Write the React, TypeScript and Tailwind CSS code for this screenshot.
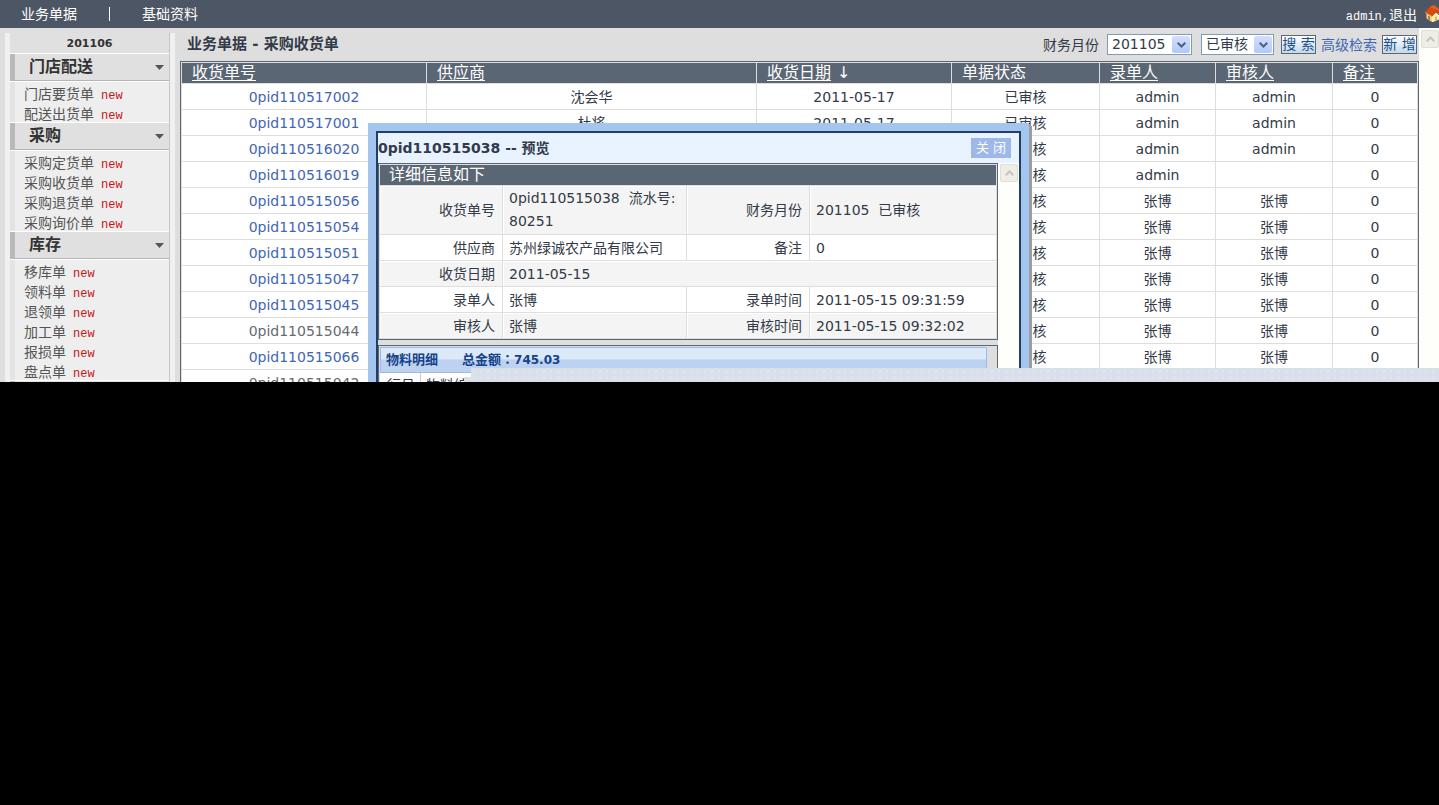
import React from "react";

type Receipt = {
  id: string;
  supplier?: string;
  date?: string;
  author: string;
  auditor: string;
  visited?: boolean;
};

const receipts: Receipt[] = [
  { id: "0pid110517002", supplier: "沈会华", date: "2011-05-17", author: "admin", auditor: "admin" },
  { id: "0pid110517001", supplier: "杜将", date: "2011-05-17", author: "admin", auditor: "admin" },
  { id: "0pid110516020", author: "admin", auditor: "admin" },
  { id: "0pid110516019", author: "admin", auditor: "" },
  { id: "0pid110515056", author: "张博", auditor: "张博" },
  { id: "0pid110515054", author: "张博", auditor: "张博" },
  { id: "0pid110515051", author: "张博", auditor: "张博" },
  { id: "0pid110515047", author: "张博", auditor: "张博" },
  { id: "0pid110515045", author: "张博", auditor: "张博" },
  { id: "0pid110515044", author: "张博", auditor: "张博", visited: true },
  { id: "0pid110515066", author: "张博", auditor: "张博" },
  { id: "0pid110515042", author: "张博", auditor: "张博", visited: true },
];

const menu = [
  { title: "门店配送", items: ["门店要货单", "配送出货单"] },
  { title: "采购", items: ["采购定货单", "采购收货单", "采购退货单", "采购询价单"] },
  { title: "库存", items: ["移库单", "领料单", "退领单", "加工单", "报损单", "盘点单"] },
  { title: "", items: [] },
];

const columns = [
  { label: "收货单号", width: "w-[245px]", sortable: true },
  { label: "供应商", width: "", sortable: true },
  { label: "收货日期", width: "w-[195px]", sortable: true, sorted: true },
  { label: "单据状态", width: "w-[148px]", sortable: false },
  { label: "录单人", width: "w-[116px]", sortable: true },
  { label: "审核人", width: "w-[117px]", sortable: true },
  { label: "备注", width: "w-[85px]", sortable: true },
];

function HouseIcon() {
  return (
    <svg width="14" height="18" viewBox="0 0 14 18" className="shrink-0" aria-hidden="true">
      <path d="M1.5 8 L7 11 V17 L1.5 13.5 Z" fill="#f5d58c" />
      <path d="M7 11 L11 7.5 L14 10 V14.5 L8 17 L7 17 Z" fill="#fdf0b4" />
      <path d="M3 10.5 L5 11.7 V15.2 L3 14 Z" fill="#b5762e" />
      <path d="M10 12 L12 11.2 V15.2 L10 16 Z" fill="#e0b050" />
      <path d="M0 7.5 L4.5 2 L9 0 L14 4 V9 L11.5 6.5 L7 11.5 Z" fill="#d9480f" />
      <path d="M4.5 2 L9 0 L14 4 V5.5 L9.5 4 Z" fill="#e5601a" />
      <path d="M0 7.5 L7 11.5" stroke="#f29a4a" strokeWidth="1" />
    </svg>
  );
}

function Dropdown({ label, value, width }: { label: string; value: string; width: string }) {
  return (
    <span className={`relative block h-[21px] ${width}`}>
      <select
        aria-label={label}
        defaultValue={value}
        className="h-full w-full appearance-none border border-[#7f9db9] bg-white pl-1 leading-[19px] text-[#333a48]"
      >
        <option>{value}</option>
      </select>
      <span className="pointer-events-none absolute top-0.5 right-0.5 flex h-[17px] w-[18px] items-center justify-center rounded-xs bg-linear-to-b from-[#d3dffd] to-[#b3c8f9]">
        <svg width="9" height="6" viewBox="0 0 9 6" fill="none" stroke="#4d6185" strokeWidth="2">
          <path d="M0.7 0.7 L4.5 4.5 L8.3 0.7" />
        </svg>
      </span>
    </span>
  );
}

function ToolButton({ children }: { children: React.ReactNode }) {
  return (
    <button
      type="button"
      className="h-[19px] w-[35px] border border-[#5b6675] bg-linear-to-b from-white to-[#c3d9ea] leading-[17px] whitespace-nowrap text-[#1b4f8f]"
    >
      {children}
    </button>
  );
}

function ScrollButton() {
  return (
    <button
      type="button"
      aria-label="向上滚动"
      className="flex h-[18px] w-[18px] items-center justify-center rounded-xs border border-[#e0dfd3] bg-[#eeede6]"
    >
      <svg width="9" height="6" viewBox="0 0 9 6" fill="none" stroke="#c5c5bc" strokeWidth="2">
        <path d="M0.7 5.3 L4.5 1.5 L8.3 5.3" />
      </svg>
    </button>
  );
}

function Sidebar() {
  return (
    <aside className="mt-[5px] ml-[5px] flex w-[170px] shrink-0 border-x-5 border-[#f0f0f0]">
      <div className="flex-1 border-r border-[#c6c6c6] bg-[#eeeeee]">
        <div className="h-5 bg-[#e0e0e0] text-center text-[11px] leading-[21px] font-bold text-[#333]">201106</div>
        {menu.map((group, i) => (
          <section key={i}>
            <h2 className="h-[29px] border-y border-white text-base font-bold text-[#333]">
              <span className="flex h-full w-full items-center justify-between border-b border-l-5 border-b-[#b5b5b5] border-l-[#b9b9b9] bg-[#e0e0e0] pr-[5px] pl-[14px]">
                {group.title}
                <svg width="9" height="5" viewBox="0 0 9 5" aria-hidden="true">
                  <path d="M0 0 H9 L4.5 5 Z" fill="#555" />
                </svg>
              </span>
            </h2>
            <ul className="border-l-5 border-[#e3e3e3]">
              {group.items.map((item) => (
                <li key={item} className="h-5 pl-[9px] leading-6 text-[#555]">
                  <a href="#" className="flex items-baseline gap-[7px]">
                    {item}
                    <span className="font-['Liberation_Mono',monospace] text-xs leading-5 text-[#c81414]">new</span>
                  </a>
                </li>
              ))}
            </ul>
          </section>
        ))}
      </div>
    </aside>
  );
}

function ReceiptTable() {
  return (
    <div className="border border-[#5b6675] bg-[#dedede] pt-px pl-px">
      <table className="w-full table-fixed border-separate border-spacing-0">
        <thead>
          <tr className="h-[21px] bg-[#5b6675] text-base leading-5 text-white">
            {columns.map((c) => (
              <th
                key={c.label}
                className={`border-r border-b border-[#dedede] p-0 pl-2.5 text-left font-normal ${c.width}`}
              >
                {c.sortable ? (
                  <a href="#" className="underline decoration-1 underline-offset-2">
                    {c.label}
                  </a>
                ) : (
                  c.label
                )}
                {c.sorted && <span className="ml-1.5">↓</span>}
              </th>
            ))}
          </tr>
        </thead>
        <tbody className="bg-white text-center">
          {receipts.map((r) => (
            <tr key={r.id} className="h-[26px] *:border-r *:border-b *:border-[#dedede] *:p-0">
              <td>
                <a href="#" className={r.visited ? "text-[#666a70]" : "text-[#3f66b5]"}>
                  {r.id}
                </a>
              </td>
              <td>{r.supplier}</td>
              <td>{r.date}</td>
              <td>已审核</td>
              <td>{r.author}</td>
              <td>{r.auditor}</td>
              <td>0</td>
            </tr>
          ))}
        </tbody>
      </table>
    </div>
  );
}

function DetailTable() {
  return (
    <div className="border border-[#5b6675] bg-[#dedede] pt-px pl-px">
      <table className="w-full table-fixed border-separate border-spacing-0">
        <colgroup>
          <col className="w-[123px]" />
          <col className="w-[184px]" />
          <col className="w-[123px]" />
          <col />
        </colgroup>
        <thead>
          <tr className="h-[21px] bg-[#5b6675] text-base leading-5 text-white">
            <th colSpan={4} className="border-r border-b border-[#dedede] p-0 pl-[9px] text-left font-normal">
              详细信息如下
            </th>
          </tr>
        </thead>
        <tbody className="text-left [&_td]:border-r [&_td]:border-b [&_td]:border-[#dedede] [&_td]:p-0 [&_td]:pl-1.5 [&_td]:shadow-[inset_1px_1px_0_#fff] [&_th]:border-r [&_th]:border-b [&_th]:border-[#dedede] [&_th]:p-0 [&_th]:pr-[7px] [&_th]:text-right [&_th]:font-normal [&_th]:shadow-[inset_1px_1px_0_#fff]">
          <tr className="h-[49px] bg-[#f4f4f4]">
            <th scope="row">收货单号</th>
            <td className="leading-[23px]">0pid110515038&nbsp; 流水号: 80251</td>
            <th scope="row">财务月份</th>
            <td>201105&nbsp; 已审核</td>
          </tr>
          <tr className="h-[26px] bg-white">
            <th scope="row">供应商</th>
            <td>苏州绿诚农产品有限公司</td>
            <th scope="row">备注</th>
            <td>0</td>
          </tr>
          <tr className="h-[26px] bg-[#f4f4f4]">
            <th scope="row">收货日期</th>
            <td colSpan={3}>2011-05-15</td>
          </tr>
          <tr className="h-[26px] bg-white">
            <th scope="row">录单人</th>
            <td>张博</td>
            <th scope="row">录单时间</th>
            <td>2011-05-15 09:31:59</td>
          </tr>
          <tr className="h-[26px] bg-[#f4f4f4]">
            <th scope="row">审核人</th>
            <td>张博</td>
            <th scope="row">审核时间</th>
            <td>2011-05-15 09:32:02</td>
          </tr>
        </tbody>
      </table>
    </div>
  );
}

function PreviewDialog() {
  return (
    <div
      role="dialog"
      aria-label="预览"
      className="absolute top-[123px] bottom-0 left-[368px] flex w-[661px] bg-[#a4c5ee] px-2 pt-2 shadow-[3px_3px_0_#9b9da0]"
    >
      <div className="flex min-w-0 flex-1 flex-col border-2 border-b-0 border-[#213f66] bg-[#dedede]">
        <div className="flex h-[30px] shrink-0 items-center justify-between bg-[#e8f3ff] pr-2">
          <h2 className="font-bold">0pid110515038 -- 预览</h2>
          <button type="button" className="h-5 w-10 bg-[#9fb8ea] text-[13px] leading-5 text-white">
            关 闭
          </button>
        </div>
        <div className="flex min-h-0 flex-1">
          <div className="min-w-0 flex-1">
            <DetailTable />
            <div className="mt-[5px] border border-[#5b6675] pt-px pr-2.5 pl-px">
              <div className="flex h-[26px] items-center gap-6 border border-[#99bbe8] bg-linear-to-b from-[#dce9f9] from-45% to-[#bcd2f0] to-50% pl-[5px] text-[13px] font-bold text-[#15428b]">
                <span>物料明细</span>
                <span>
                  总金额<span className="font-['Noto_Sans_CJK_TC',sans-serif]" lang="zh-TW">：</span>
                  <span className="text-xs">745.03</span>
                </span>
              </div>
              <table className="w-full table-fixed border-separate border-spacing-0 bg-white">
                <thead>
                  <tr className="h-6">
                    <th className="w-[41px] border-r border-[#ccc] p-0 pl-[7px] text-left font-normal">行号</th>
                    <th className="p-0 pl-[5px] text-left font-normal">物料编号</th>
                  </tr>
                </thead>
              </table>
            </div>
          </div>
          <div className="w-[21px] bg-[#fefefa] pt-px pl-0.5">
            <ScrollButton />
          </div>
        </div>
      </div>
    </div>
  );
}

export default function App() {
  return (
    <div
      lang="zh-CN"
      className="min-h-screen bg-black font-['DejaVu_Sans','Noto_Sans_CJK_SC',sans-serif] text-sm text-[#333a48]"
    >
      <div className="relative flex h-[382px] flex-col overflow-hidden bg-[#dedede]">
        <header className="flex h-7 shrink-0 items-center justify-between bg-[#4d5665] pl-[21px] text-white">
          <nav className="flex items-center">
            <a href="#">业务单据</a>
            <span className="mx-8 h-3.5 w-px bg-white" />
            <a href="#">基础资料</a>
          </nav>
          <div className="flex items-center gap-2">
            <a href="#" className="pt-1 font-['Liberation_Mono','Noto_Sans_CJK_SC',monospace]">
              <span className="text-xs">admin,</span>退出
            </a>
            <HouseIcon />
          </div>
        </header>

        <div className="flex min-h-0 flex-1">
          <Sidebar />
          <main className="min-w-0 flex-1 pl-[5px]">
            <div className="flex h-[33px] items-center justify-between pl-[7px]">
              <h1 className="text-[15px] font-bold">业务单据 - 采购收货单</h1>
              <form className="flex items-center pr-0.5" onSubmit={(e) => e.preventDefault()}>
                <span className="mr-2">财务月份</span>
                <Dropdown label="财务月份" value="201105" width="mr-[9px] w-[85px]" />
                <Dropdown label="单据状态" value="已审核" width="mr-[7px] w-[73px]" />
                <ToolButton>搜 索</ToolButton>
                <a href="#" className="mx-[5px] text-[#3f66b5]">
                  高级检索
                </a>
                <ToolButton>新 增</ToolButton>
              </form>
            </div>
            <ReceiptTable />
          </main>
          <div className="w-5 shrink-0 bg-[#fefefa] pt-0.5 pl-0.5">
            <ScrollButton />
          </div>
        </div>

        <PreviewDialog />
        <div className="absolute right-0 bottom-0 left-[471px] h-3.5 bg-[#d9e0ea] bg-[radial-gradient(#e3e9f1_1px,transparent_1px)] bg-[length:7px_7px]" />
        <div className="absolute bottom-0 left-[464px] h-[5px] w-[7px] bg-[#d9e0ea]" />
      </div>
    </div>
  );
}
